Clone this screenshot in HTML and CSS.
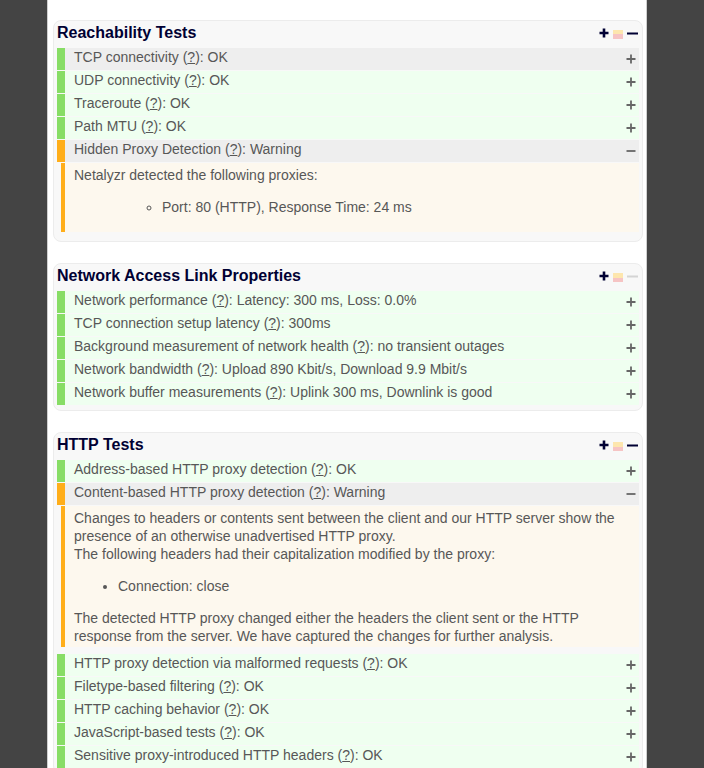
FILE: index.html
```html
<!DOCTYPE html>
<html>
<head>
<meta charset="utf-8">
<title>Netalyzr results</title>
<link rel="stylesheet" href="styles.css">
</head>
<body>
<div class="page">

  <section class="box">
    <div class="head">
      <h2 class="title">Reachability Tests</h2>
      <div class="tools">
        <svg class="hplus" width="10" height="10" viewBox="0 0 10 10"><path d="M5 0.5V9.5M0.5 5H9.5" stroke="#000033" stroke-width="2.6"/></svg>
        <span class="legend"></span>
        <svg class="hminus" width="11" height="10" viewBox="0 0 11 10"><path d="M0 5.5H11" stroke="#000033" stroke-width="2"/></svg>
      </div>
    </div>
    <div class="row hover"><span class="bar ok"></span><span class="label">TCP connectivity (<a class="q">?</a>): OK</span><svg class="tg" width="10" height="10" viewBox="0 0 10 10"><path d="M5 0.5V9.5M0.5 5H9.5" stroke="#666" stroke-width="1.8"/></svg></div>
    <div class="row"><span class="bar ok"></span><span class="label">UDP connectivity (<a class="q">?</a>): OK</span><svg class="tg" width="10" height="10" viewBox="0 0 10 10"><path d="M5 0.5V9.5M0.5 5H9.5" stroke="#666" stroke-width="1.8"/></svg></div>
    <div class="row"><span class="bar ok"></span><span class="label">Traceroute (<a class="q">?</a>): OK</span><svg class="tg" width="10" height="10" viewBox="0 0 10 10"><path d="M5 0.5V9.5M0.5 5H9.5" stroke="#666" stroke-width="1.8"/></svg></div>
    <div class="row"><span class="bar ok"></span><span class="label">Path MTU (<a class="q">?</a>): OK</span><svg class="tg" width="10" height="10" viewBox="0 0 10 10"><path d="M5 0.5V9.5M0.5 5H9.5" stroke="#666" stroke-width="1.8"/></svg></div>
    <div class="row open"><span class="bar warn"></span><span class="label">Hidden Proxy Detection (<a class="q">?</a>): Warning</span><svg class="tg" width="10" height="10" viewBox="0 0 10 10"><path d="M0.5 5H9.5" stroke="#666" stroke-width="1.8"/></svg></div>
    <div class="detail">
      <p>Netalyzr detected the following proxies:</p>
      <ul class="circle"><li>Port: 80 (HTTP), Response Time: 24 ms</li></ul>
    </div>
  </section>

  <section class="box">
    <div class="head">
      <h2 class="title">Network Access Link Properties</h2>
      <div class="tools">
        <svg class="hplus" width="10" height="10" viewBox="0 0 10 10"><path d="M5 0.5V9.5M0.5 5H9.5" stroke="#000033" stroke-width="2.6"/></svg>
        <span class="legend"></span>
        <svg class="hminus" width="11" height="10" viewBox="0 0 11 10"><path d="M0 5.5H11" stroke="#d4d4d4" stroke-width="2"/></svg>
      </div>
    </div>
    <div class="row"><span class="bar ok"></span><span class="label">Network performance (<a class="q">?</a>): Latency: 300 ms, Loss: 0.0%</span><svg class="tg" width="10" height="10" viewBox="0 0 10 10"><path d="M5 0.5V9.5M0.5 5H9.5" stroke="#666" stroke-width="1.8"/></svg></div>
    <div class="row"><span class="bar ok"></span><span class="label">TCP connection setup latency (<a class="q">?</a>): 300ms</span><svg class="tg" width="10" height="10" viewBox="0 0 10 10"><path d="M5 0.5V9.5M0.5 5H9.5" stroke="#666" stroke-width="1.8"/></svg></div>
    <div class="row"><span class="bar ok"></span><span class="label">Background measurement of network health (<a class="q">?</a>): no transient outages</span><svg class="tg" width="10" height="10" viewBox="0 0 10 10"><path d="M5 0.5V9.5M0.5 5H9.5" stroke="#666" stroke-width="1.8"/></svg></div>
    <div class="row"><span class="bar ok"></span><span class="label">Network bandwidth (<a class="q">?</a>): Upload 890 Kbit/s, Download 9.9 Mbit/s</span><svg class="tg" width="10" height="10" viewBox="0 0 10 10"><path d="M5 0.5V9.5M0.5 5H9.5" stroke="#666" stroke-width="1.8"/></svg></div>
    <div class="row"><span class="bar ok"></span><span class="label">Network buffer measurements (<a class="q">?</a>): Uplink 300 ms, Downlink is good</span><svg class="tg" width="10" height="10" viewBox="0 0 10 10"><path d="M5 0.5V9.5M0.5 5H9.5" stroke="#666" stroke-width="1.8"/></svg></div>
  </section>

  <section class="box">
    <div class="head">
      <h2 class="title">HTTP Tests</h2>
      <div class="tools">
        <svg class="hplus" width="10" height="10" viewBox="0 0 10 10"><path d="M5 0.5V9.5M0.5 5H9.5" stroke="#000033" stroke-width="2.6"/></svg>
        <span class="legend"></span>
        <svg class="hminus" width="11" height="10" viewBox="0 0 11 10"><path d="M0 5.5H11" stroke="#000033" stroke-width="2"/></svg>
      </div>
    </div>
    <div class="row"><span class="bar ok"></span><span class="label">Address-based HTTP proxy detection (<a class="q">?</a>): OK</span><svg class="tg" width="10" height="10" viewBox="0 0 10 10"><path d="M5 0.5V9.5M0.5 5H9.5" stroke="#666" stroke-width="1.8"/></svg></div>
    <div class="row open"><span class="bar warn"></span><span class="label">Content-based HTTP proxy detection (<a class="q">?</a>): Warning</span><svg class="tg" width="10" height="10" viewBox="0 0 10 10"><path d="M0.5 5H9.5" stroke="#666" stroke-width="1.8"/></svg></div>
    <div class="detail">
      <p>Changes to headers or contents sent between the client and our HTTP server show the presence of an otherwise unadvertised HTTP proxy.<br>The following headers had their capitalization modified by the proxy:</p>
      <ul class="disc"><li>Connection: close</li></ul>
      <p>The detected HTTP proxy changed either the headers the client sent or the HTTP response from the server. We have captured the changes for further analysis.</p>
    </div>
    <div class="row"><span class="bar ok"></span><span class="label">HTTP proxy detection via malformed requests (<a class="q">?</a>): OK</span><svg class="tg" width="10" height="10" viewBox="0 0 10 10"><path d="M5 0.5V9.5M0.5 5H9.5" stroke="#666" stroke-width="1.8"/></svg></div>
    <div class="row"><span class="bar ok"></span><span class="label">Filetype-based filtering (<a class="q">?</a>): OK</span><svg class="tg" width="10" height="10" viewBox="0 0 10 10"><path d="M5 0.5V9.5M0.5 5H9.5" stroke="#666" stroke-width="1.8"/></svg></div>
    <div class="row"><span class="bar ok"></span><span class="label">HTTP caching behavior (<a class="q">?</a>): OK</span><svg class="tg" width="10" height="10" viewBox="0 0 10 10"><path d="M5 0.5V9.5M0.5 5H9.5" stroke="#666" stroke-width="1.8"/></svg></div>
    <div class="row"><span class="bar ok"></span><span class="label">JavaScript-based tests (<a class="q">?</a>): OK</span><svg class="tg" width="10" height="10" viewBox="0 0 10 10"><path d="M5 0.5V9.5M0.5 5H9.5" stroke="#666" stroke-width="1.8"/></svg></div>
    <div class="row"><span class="bar ok"></span><span class="label">Sensitive proxy-introduced HTTP headers (<a class="q">?</a>): OK</span><svg class="tg" width="10" height="10" viewBox="0 0 10 10"><path d="M5 0.5V9.5M0.5 5H9.5" stroke="#666" stroke-width="1.8"/></svg></div>
  </section>

</div>
</body>
</html>
```
FILE: styles.css
```css
html, body {
  margin: 0;
  padding: 0;
  background: #444444;
  height: 100%;
  overflow: hidden;
}

body {
  font-family: "Liberation Sans", Arial, sans-serif;
  font-size: 14px;
  color: #575757;
}

.page {
  margin-left: 47px;
  width: 590px;
  min-height: 100%;
  background: #ffffff;
  border-left: 1px solid #cfcfcf;
  border-right: 1px solid #cfcfcf;
  padding: 20px 3px 0 5px;
}

.box {
  background: #f8f8f8;
  border: 1px solid #ececec;
  border-radius: 8px;
  padding: 0 3px 4px 3px;
  margin-bottom: 21px;
}

.head {
  display: flex;
  align-items: flex-start;
  padding: 2px 1px 5px 0;
}

.title {
  flex: 1;
  margin: 0;
  font-size: 16px;
  line-height: 20px;
  font-weight: bold;
  color: #000033;
}

.tools {
  display: flex;
  align-items: center;
  gap: 4px;
  padding-top: 4px;
}

.hplus, .hminus {
  display: block;
}

.legend {
  display: block;
  width: 10px;
  height: 9px;
  margin-top: 3px;
  background: linear-gradient(#fde6ae 0, #fde6ae 50%, #f6c4c4 50%, #f6c4c4 100%);
}

.row {
  display: flex;
  align-items: flex-start;
  height: 22px;
  margin-bottom: 1px;
  background: #effff0;
}

.row.hover, .row.open {
  background: #eeeeee;
}

.bar {
  width: 8px;
  height: 22px;
  flex: none;
}

.bar.ok {
  background: #88dd66;
}

.bar.warn {
  background: #ffae1a;
}

.label {
  flex: 1;
  padding-left: 9px;
  line-height: 18px;
  white-space: nowrap;
}

.q {
  color: inherit;
  text-decoration: underline;
}

.tg {
  display: block;
  flex: none;
  margin: 6px 3px 0 0;
}

.detail {
  margin: 0 0 7px 4px;
  border-left: 4px solid #ffae1a;
  background: #fdf8ee;
  padding: 3px 10px 2px 9px;
  line-height: 18px;
}

.detail:last-child {
  margin-bottom: 5px;
}

.detail p {
  margin: 0;
}

.detail ul {
  margin: 14px 0;
}

.detail ul.circle {
  list-style: circle;
  padding-left: 88px;
}

.detail ul.disc {
  list-style: disc;
  padding-left: 44px;
}
```
